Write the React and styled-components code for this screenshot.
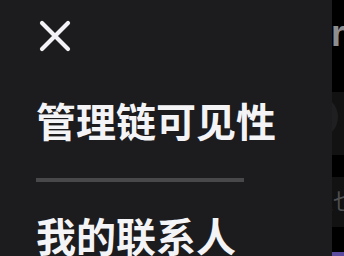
import React from 'react';
import styled, { createGlobalStyle } from 'styled-components';

const GlobalStyle = createGlobalStyle`
	html, body {
		margin: 0;
		padding: 0;
		background: #000;
		overflow: hidden;
	}
	body {
		font-family: "Noto Sans CJK SC", "Noto Sans", sans-serif;
	}
`;

const Page = styled.div`
	width: 344px;
	height: 256px;
	display: flex;
	flex-direction: column;
	padding-left: 333px;
	box-sizing: border-box;
	background: #000;
`;

const Header = styled.div`
	flex-shrink: 0;
	height: 92px;
	box-sizing: border-box;
	padding-top: 14px;
	margin-left: -2px;
	font-family: "Liberation Sans", sans-serif;
	font-weight: 700;
	font-size: 36px;
	line-height: 40px;
	color: #8e8e91;
	white-space: nowrap;
`;

const Band = styled.div`
	flex-shrink: 0;
	height: ${p => p.$height}px;
	margin-bottom: ${p => p.$gap}px;
	margin-left: -333px;
	padding-left: ${p => p.$inset}px;
	background: #121212;
	display: flex;
	align-items: center;
	white-space: nowrap;
`;

const Avatar = styled.div`
	width: 44px;
	height: 44px;
	border-radius: 50%;
	background: #1f1f21;
	margin-top: -14px;
`;

const Hint = styled.span`
	font-size: 23px;
	color: #505053;
	margin-top: -6px;
`;

const AccentBar = styled.div`
	margin-top: auto;
	margin-left: -333px;
	height: 4px;
	flex-shrink: 0;
	background: #5b4a9e;
`;

const Drawer = styled.nav`
	position: fixed;
	top: 0;
	left: 0;
	width: 332px;
	height: 100%;
	background: #1c1c1e;
	padding: 19px 0 0 36px;
	box-sizing: border-box;
	display: flex;
	flex-direction: column;
	align-items: flex-start;
	overflow: hidden;
`;

const CloseButton = styled.button`
	flex-shrink: 0;
	background: none;
	border: none;
	padding: 0;
	margin-left: 2px;
	width: 34px;
	height: 34px;
	cursor: pointer;
	display: block;
`;

const MenuItem = styled.div`
	flex-shrink: 0;
	font-size: 40px;
	font-weight: 700;
	line-height: 48px;
	color: #f4f4f7;
	white-space: nowrap;
	margin-top: ${p => p.$top}px;
`;

const Divider = styled.div`
	flex-shrink: 0;
	width: 208px;
	height: 4px;
	background: #48484b;
	margin-top: 34px;
`;

function CloseIcon() {
	return (
		<svg width="34" height="34" viewBox="0 0 34 34">
			<path d="M4 4 L30 30 M30 4 L4 30" stroke="#f2f2f7" strokeWidth="4.2" strokeLinecap="round" fill="none" />
		</svg>
	);
}

export default function App() {
	return (
		<>
			<GlobalStyle />
			<Page>
				<Header>r</Header>
				<Band $height={63} $gap={22} $inset={294}>
					<Avatar />
				</Band>
				<Band $height={50} $gap={0} $inset={310}>
					<Hint>位也</Hint>
				</Band>
				<AccentBar />
			</Page>
			<Drawer>
				<CloseButton aria-label="关闭">
					<CloseIcon />
				</CloseButton>
				<MenuItem $top={43}>管理链可见性</MenuItem>
				<Divider />
				<MenuItem $top={29}>我的联系人</MenuItem>
			</Drawer>
		</>
	);
}
